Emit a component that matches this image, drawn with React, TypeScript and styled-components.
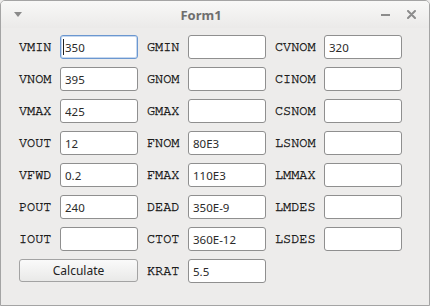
import styled, { createGlobalStyle } from "styled-components";

const GlobalStyle = createGlobalStyle`
  html, body {
    margin: 0;
    padding: 0;
    background: #edeceb;
  }
`;

type Field = { label: string; value?: string; focused?: boolean };

const columns: { labelWidth: number; fields: Field[]; button?: boolean }[] = [
  {
    labelWidth: 41,
    button: true,
    fields: [
      { label: "VMIN", value: "350", focused: true },
      { label: "VNOM", value: "395" },
      { label: "VMAX", value: "425" },
      { label: "VOUT", value: "12" },
      { label: "VFWD", value: "0.2" },
      { label: "POUT", value: "240" },
      { label: "IOUT" },
    ],
  },
  {
    labelWidth: 41,
    fields: [
      { label: "GMIN" },
      { label: "GNOM" },
      { label: "GMAX" },
      { label: "FNOM", value: "80E3" },
      { label: "FMAX", value: "110E3" },
      { label: "DEAD", value: "350E-9" },
      { label: "CTOT", value: "360E-12" },
      { label: "KRAT", value: "5.5" },
    ],
  },
  {
    labelWidth: 49,
    fields: [
      { label: "CVNOM", value: "320" },
      { label: "CINOM" },
      { label: "CSNOM" },
      { label: "LSNOM" },
      { label: "LMMAX" },
      { label: "LMDES" },
      { label: "LSDES" },
    ],
  },
];

export default function App() {
  return (
    <>
      <GlobalStyle />
      <Window>
        <TitleBar>
          <TitleLeft>
            <svg width="8" height="5" viewBox="0 0 8 5">
              <path d="M0 0 H8 L4 5 Z" fill="#8a8a8a" />
            </svg>
          </TitleLeft>
          <Title>Form1</Title>
          <TitleRight>
            <svg width="9" height="9" viewBox="0 0 9 9">
              <rect x="0" y="4" width="9" height="2" fill="#8c8c8c" />
            </svg>
            <svg width="9" height="9" viewBox="0 0 9 9">
              <path
                d="M1 1 L8 8 M8 1 L1 8"
                stroke="#8c8c8c"
                strokeWidth="2"
                strokeLinecap="round"
              />
            </svg>
          </TitleRight>
        </TitleBar>
        <Body>
          {columns.map((col, ci) => (
            <Column key={ci} $labelWidth={col.labelWidth}>
              {col.fields.map((f) => (
                <Row key={f.label}>
                  <Label>{f.label}</Label>
                  <InputWrap>
                    <TextBox $focused={f.focused} defaultValue={f.value ?? ""} />
                    {f.focused && <Caret />}
                  </InputWrap>
                </Row>
              ))}
              {col.button && <Button>Calculate</Button>}
            </Column>
          ))}
        </Body>
      </Window>
    </>
  );
}

const Window = styled.div`
  width: 430px;
  height: 306px;
  box-sizing: border-box;
  border: 1px solid #a4a4a4;
  border-radius: 5px 5px 0 0;
  overflow: hidden;
  background: #edeceb;
  display: flex;
  flex-direction: column;
`;

const TitleBar = styled.div`
  height: 27px;
  display: flex;
  align-items: center;
  background: linear-gradient(#f8f8f7, #ebeae9);
`;

const TitleLeft = styled.div`
  width: 30px;
  padding-left: 13px;
  box-sizing: border-box;
  display: flex;
  align-items: center;
  margin-top: -1px;
`;

const Title = styled.div`
  flex: 1;
  text-align: center;
  font-family: "Noto Sans", sans-serif;
  font-weight: bold;
  font-size: 13px;
  color: #6e6e6e;
`;

const TitleRight = styled.div`
  width: 58px;
  box-sizing: border-box;
  padding-right: 13px;
  display: flex;
  justify-content: flex-end;
  align-items: center;
  gap: 17px;
`;

const Body = styled.div`
  flex: 1;
  display: flex;
  gap: 9px;
  padding: 7px 0 0 18px;
  align-items: flex-start;
`;

const Column = styled.div<{ $labelWidth: number }>`
  display: grid;
  grid-template-columns: ${(p) => p.$labelWidth}px 78px;
  row-gap: 8px;
`;

const Row = styled.div`
  display: contents;
`;

const Label = styled.div`
  font-family: "Nimbus Mono PS", "Nimbus Mono L", "FreeMono", "Courier 10 Pitch",
    "Liberation Mono", monospace;
  font-size: 13.5px;
  color: #1c1c1c;
  -webkit-text-stroke: 0.35px #1c1c1c;
  height: 24px;
  line-height: 24px;
`;

const InputWrap = styled.div`
  position: relative;
  height: 24px;
`;

const TextBox = styled.input<{ $focused?: boolean }>`
  width: 78px;
  height: 24px;
  box-sizing: border-box;
  margin: 0;
  padding: 0 4px;
  border: 1px solid ${(p) => (p.$focused ? "#6b97d0" : "#8f8f8f")};
  box-shadow: ${(p) => (p.$focused ? "inset 0 0 0 1px #c6d8ef" : "none")};
  border-radius: 3px;
  background: #fff;
  font-family: "Noto Sans", sans-serif;
  font-size: 11.5px;
  color: #2a2a2a;
  outline: none;
`;

const Caret = styled.span`
  position: absolute;
  left: 3px;
  top: 4px;
  width: 1px;
  height: 16px;
  background: #222;
`;

const Button = styled.button`
  grid-column: 1 / -1;
  width: 119px;
  height: 23px;
  margin: 0;
  padding: 0;
  box-sizing: border-box;
  border: 1px solid #a3a3a3;
  border-radius: 3px;
  background: linear-gradient(#fafafa, #e9e9e8);
  font-family: "Noto Sans", sans-serif;
  font-size: 12px;
  color: #222;
`;
